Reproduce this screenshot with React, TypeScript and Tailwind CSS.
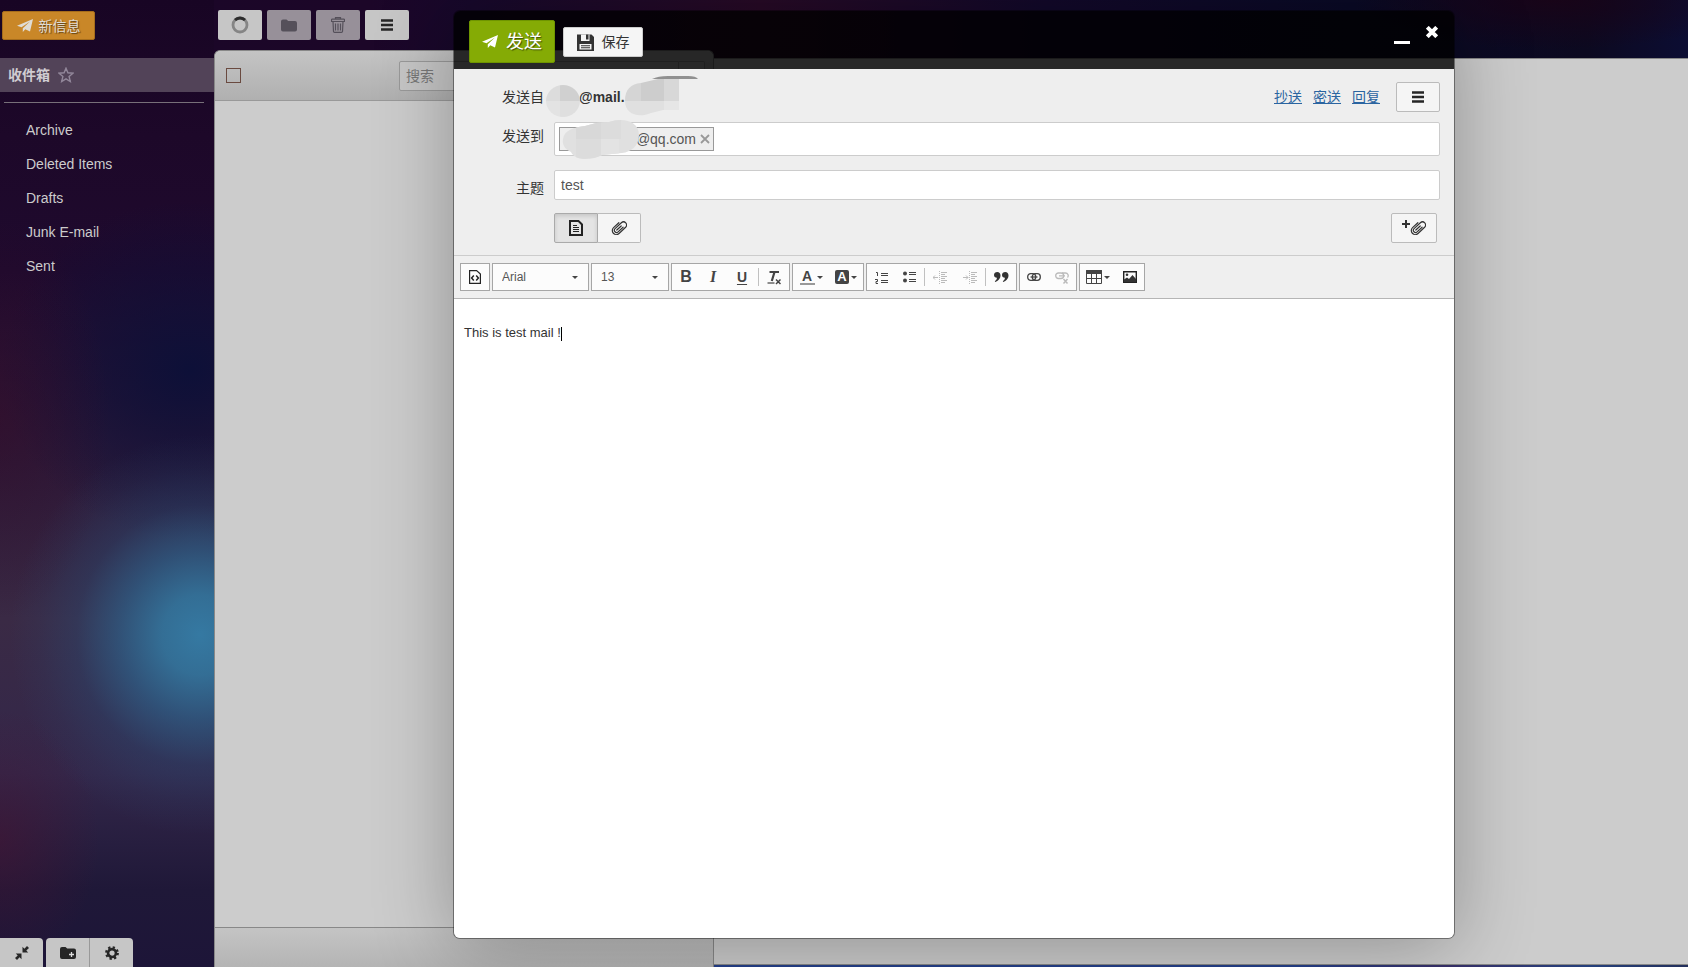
import type { ReactNode } from 'react'

const FOLDERS = ['Archive', 'Deleted Items', 'Drafts', 'Junk E-mail', 'Sent']

export default function App() {
  return (
    <div className="relative flex h-screen overflow-hidden bg-[radial-gradient(ellipse_200px_50px_at_92%_0,#180418,transparent),linear-gradient(90deg,#1a0628_0%,#1c0628_22%,#17082b_28%,#270a26_45%,#12082a_62%,#0a0a26_80%,#0c0920_94%,#0c0d33_100%)] font-['Liberation_Sans','Noto_Sans_CJK_SC',sans-serif] text-sm text-[#333]">
      <Sidebar />
      <MessageList />
      <main className="flex min-w-0 flex-1 flex-col pt-[58px]">
        <div className="flex-1 border-y border-[#888] bg-[#ccc]" />
        <div className="h-0.5 bg-[linear-gradient(90deg,#25408c,#25408c_60%,#38306a_75%,#25407c_90%,#24305c)]" />
      </main>
      <Composer />
    </div>
  )
}

function Sidebar() {
  return (
    <aside className="flex w-[214px] shrink-0 flex-col bg-[radial-gradient(ellipse_190px_200px_at_200px_635px,#3579a2_0%,#33759de8_20%,#2d6690a8_42%,#28507a58_65%,#28507a20_84%,transparent_100%),radial-gradient(ellipse_110px_200px_at_0_420px,#3a0a2470,transparent),radial-gradient(ellipse_100px_130px_at_0_840px,#4a123080,transparent),radial-gradient(ellipse_190px_170px_at_190px_370px,#0d1038,transparent),linear-gradient(180deg,#180524_0,#1d0829_14%,#1f0a2e_28%,#2b1a3a_48%,#3a2a45_64%,#33274a_80%,#1f1838_92%,#1d1538_100%)]">
      <div className="h-[58px] pt-[11px] pl-0.5">
        <button
          type="button"
          className="flex h-[29px] w-[93px] items-center justify-center gap-1.5 rounded-xs border border-[#a56c1c] bg-[#c98728] text-[#e0dcd4] [text-shadow:1px_1px_1px_#0008]"
        >
          <PaperPlane className="h-[13px] w-4" />
          新信息
        </button>
      </div>
      <a href="#inbox" className="flex h-[34px] items-center gap-2 bg-[#524358] pl-2 font-bold text-[#d0ccd2]">
        收件箱
        <svg viewBox="0 0 16 16" className="size-4" fill="none" stroke="#92879a" strokeWidth="1.4" aria-hidden="true">
          <path d="M8 1.2 9.9 5.8 15 6.2 11.1 9.5 12.3 14.5 8 11.8 3.7 14.5 4.9 9.5 1 6.2 6.1 5.8z" />
        </svg>
      </a>
      <hr className="mt-2.5 mr-2.5 ml-1 border-[#777079]" />
      <nav className="mt-2.5 flex flex-1 flex-col">
        {FOLDERS.map((name) => (
          <a key={name} href={`#${name}`} className="flex h-[34px] items-center pl-[26px] text-[#ccc]">
            {name}
          </a>
        ))}
      </nav>
      <div className="flex gap-[3px]">
        <button type="button" aria-label="Collapse" className="flex h-[29px] w-[43px] items-center justify-center rounded-tr-sm bg-[#c6c6c6]">
          <svg viewBox="0 0 14 14" className="size-3.5" fill="#262626" aria-hidden="true">
            <path d="M7.500.800v5.700h5.700L11.300 4.600 14 2 12 0 9.400 2.700zM6.500 13.200V7.500H.800L2.700 9.400 0 12l2 2 2.600-2.700z" />
          </svg>
        </button>
        <div className="flex">
          <button type="button" aria-label="New folder" className="flex h-[29px] w-[44px] items-center justify-center rounded-tl-sm border-r border-[#999] bg-[#c6c6c6]">
            <svg viewBox="0 0 16 14" className="h-3.5 w-4" aria-hidden="true">
              <path fill="#262626" d="M0 3Q0 1 2 1h3.500l1.700 1.500H14q2 0 2 2V11q0 2-2 2H2q-2 0-2-2z" />
              <path stroke="#ddd" strokeWidth="1.300" d="M11.500 6v5M9 8.500h5" />
            </svg>
          </button>
          <button type="button" aria-label="Settings" className="flex h-[29px] w-[43px] items-center justify-center rounded-tr-sm bg-[#c6c6c6]">
            <svg viewBox="0 0 16 16" className="size-3.5" aria-hidden="true">
              <circle cx="8" cy="8" r="4.500" fill="none" stroke="#262626" strokeWidth="3" />
              <circle cx="8" cy="8" r="6.600" fill="none" stroke="#262626" strokeWidth="2.600" strokeDasharray="2.600 2.580" />
            </svg>
          </button>
        </div>
      </div>
    </aside>
  )
}

function MessageList() {
  return (
    <section className="flex w-[500px] shrink-0 flex-col">
      <div className="flex h-[50px] gap-[5px] pt-2.5 pl-1">
        <ToolButton label="Reload" className="bg-[#c6c6c6]">
          <svg viewBox="0 0 18 18" className="size-[18px]" fill="none" strokeWidth="2.800" aria-hidden="true">
            <circle cx="9" cy="9" r="7" stroke="#858585" />
            <path d="M4 4.100A7 7 0 0 1 14 4.100" stroke="#2b2b2b" />
          </svg>
        </ToolButton>
        <ToolButton label="Move to folder" className="bg-[#979099]">
          <svg viewBox="0 0 16 13" className="h-[13px] w-4" fill="#55505a" aria-hidden="true">
            <path d="M0 2.500Q0 .5 2 .5h3.500L7.200 2H14q2 0 2 2v6.500q0 2-2 2H2q-2 0-2-2z" />
          </svg>
        </ToolButton>
        <ToolButton label="Delete" className="bg-[#979099]">
          <svg viewBox="0 0 14 16" className="h-4 w-3.5" fill="none" stroke="#55505a" strokeWidth="1.200" aria-hidden="true">
            <path d="M.5 4.500V3q0-.8.800-.8h11.400q.8 0 .8.800v1.500zM4.500 2V.6h5V2M2 4.500l.5 10q.1.900 1 .9h7q.9 0 1-.9l.5-10M4.500 6.500v7M7 6.500v7M9.500 6.500v7" />
          </svg>
        </ToolButton>
        <ToolButton label="More" className="bg-[#c6c6c6]">
          <Bars />
        </ToolButton>
      </div>
      <div className="flex flex-1 flex-col rounded-t-md border border-b-0 border-[#888] bg-[#ccc]">
        <div className="flex h-[50px] items-center rounded-t-md border-b border-[#999] bg-linear-to-b from-[#c4c4c4] to-[#b0b0b0] pr-2 pl-[11px]">
          <input type="checkbox" aria-label="Select all" className="size-[15px] appearance-none border border-[#6a4a40]" />
          <div className="ml-auto flex w-[306px]">
            <input
              type="text"
              aria-label="搜索"
              placeholder="搜索"
              className="h-[30px] min-w-0 flex-1 rounded-l-xs border border-[#999] bg-[#c6c6c6] px-1.5 placeholder:text-[#777]"
            />
            <button type="button" aria-label="Search options" className="h-[30px] w-[26px] rounded-r-xs border border-l-0 border-[#999] bg-[#c6c6c6]" />
          </div>
        </div>
        <div className="flex-1" />
        <div className="h-10 border-t border-[#888] bg-linear-to-b from-[#c4c4c4] to-[#b4b4b4]" />
      </div>
    </section>
  )
}

function Composer() {
  return (
    <div className="absolute inset-0 flex justify-center pt-[11px] pb-[29px] pl-[220px]">
      <div role="dialog" aria-label="发送" className="flex w-[1000px] flex-col overflow-hidden rounded-md shadow-[0_0_0_1px_#0006,0_8px_80px_#0000004d]">
        <header className="flex h-[58px] shrink-0 items-start bg-black/80 pt-[9px] pr-4 pl-[15px]">
          <button
            type="button"
            className="flex h-[43px] w-[86px] items-center justify-center gap-2 rounded-xs border border-[#6f9500] bg-[#85ab05] text-lg text-white [text-shadow:1px_1px_1px_#0008]"
          >
            <PaperPlane className="h-[13px] w-4" />
            发送
          </button>
          <button type="button" className="mt-[7px] ml-2 flex h-[30px] w-20 items-center justify-center gap-2 rounded-xs border border-[#ccc] bg-[#f5f5f5]">
            <svg viewBox="0 0 17 17" className="size-[17px]" aria-hidden="true">
              <path fill="#333" d="M0 .5h14.500L17 3v14H0z" />
              <path fill="#f5f5f5" d="M4 .5h8.500V7H4zM2.500 10h12v5.500h-12z" />
              <path fill="#333" d="M9 .5h2.500v5H9zM4 11.300h9v1H4zM4 13.300h9v1H4z" />
            </svg>
            保存
          </button>
          <button type="button" aria-label="Minimize" className="ml-auto flex h-6 w-4 items-end">
            <span className="h-[3px] w-4 bg-white" />
          </button>
          <button type="button" aria-label="Close" className="mt-1.5 ml-4">
            <svg viewBox="0 0 12 12" className="size-3" stroke="#fff" strokeWidth="4" aria-hidden="true">
              <path d="M1.300 1.300 10.700 10.700M10.700 1.300 1.300 10.700" />
            </svg>
          </button>
        </header>

        <form className="border-b border-[#ccc] bg-[#eee] pt-[13px] pr-3.5 pb-3">
          <div className="mb-2.5 flex h-[30px] items-center gap-2.5">
            <span className="ml-2.5 w-20 text-right">发送自</span>
            <div className="relative ml-[25px] font-bold">
              @mail.
              <FromSmudge />
            </div>
            <div className="ml-auto flex gap-[11px] pr-1.5 text-[#2a64a0] underline">
              <a href="#cc">抄送</a>
              <a href="#bcc">密送</a>
              <a href="#reply-to">回复</a>
            </div>
            <FormButton label="More" className="w-11">
              <Bars />
            </FormButton>
          </div>

          <div className="mb-3.5 flex gap-2.5">
            <label htmlFor="to" className="ml-2.5 w-20 pt-1 text-right">
              发送到
            </label>
            <div className="flex h-[34px] flex-1 items-center rounded-xs border border-[#ccc] bg-white px-1">
              <span className="relative flex h-6 w-[155px] items-center justify-end gap-1 border border-[#999] bg-[#eee] pr-[3px] text-[#555]">
                @qq.com
                <button type="button" aria-label="Remove">
                  <svg viewBox="0 0 10 10" className="size-2.5" stroke="#999" strokeWidth="1.800" aria-hidden="true">
                    <path d="M1 1l8 8M9 1 1 9" />
                  </svg>
                </button>
                <ToSmudge />
              </span>
              <input id="to" type="text" className="min-w-0 flex-1 outline-none" />
            </div>
          </div>

          <div className="mb-[13px] flex gap-2.5">
            <label htmlFor="subject" className="ml-2.5 w-20 pt-2 text-right">
              主题
            </label>
            <input
              id="subject"
              type="text"
              defaultValue="test"
              className="h-[30px] flex-1 rounded-xs border border-[#ccc] bg-white px-1.5 text-[#555]"
            />
          </div>

          <div className="flex items-center pr-[3px] pl-[100px]">
            <button type="button" aria-label="Text" className="flex h-[30px] w-11 items-center justify-center rounded-l-xs border border-[#aaa] bg-[#e4e4e4] shadow-[inset_0_2px_4px_#0002]">
              <svg viewBox="0 0 14 16" className="h-4 w-3.5" fill="none" stroke="#222" aria-hidden="true">
                <path strokeWidth="2" d="M1 1h8.500L13 4.500V15H1z" />
                <path strokeWidth="1" d="M4 5.500h4M4 7.500h6M4 9.500h6M4 11.500h6" />
              </svg>
            </button>
            <button type="button" aria-label="Attachments" className="flex h-[30px] w-[43px] items-center justify-center rounded-r-xs border border-l-0 border-[#bbb] bg-[#f5f5f5]">
              <Clip />
            </button>
            <FormButton label="Add attachment" className="ml-auto w-[46px]">
              <svg viewBox="0 0 8 8" className="mb-2 size-2" stroke="#333" strokeWidth="2" aria-hidden="true">
                <path d="M4 0v8M0 4h8" />
              </svg>
              <Clip />
            </FormButton>
          </div>
        </form>

        <EditorToolbar />

        <div
          contentEditable
          suppressContentEditableWarning
          role="textbox"
          aria-label="Message"
          className="flex-1 bg-white px-2.5 pt-6 text-[13px] leading-5 outline-none"
        >
          <p>
            This is test mail !<span className="inline-block h-3.5 w-px bg-black align-middle" />
          </p>
        </div>
      </div>
    </div>
  )
}

function EditorToolbar() {
  return (
    <div role="toolbar" className="flex h-[43px] shrink-0 items-center gap-0.5 border-b border-[#b5b5b5] bg-[#efefef] pl-1.5">
      <Group>
        <EditorButton label="Source" className="w-7">
          <svg viewBox="0 0 12 14" className="h-3.5 w-3" fill="none" stroke="#222" aria-hidden="true">
            <path strokeWidth="1.200" d="M.6.600h7L11.400 4v9.400H.6z" />
            <path strokeWidth="1.500" d="M4.800 5.500 2.600 8l2.200 2.500M7.200 5.500 9.400 8l-2.200 2.500" />
          </svg>
        </EditorButton>
      </Group>
      <Group>
        <Combo label="Font" value="Arial" className="w-[95px]" />
      </Group>
      <Group>
        <Combo label="Size" value="13" className="w-[76px]" />
      </Group>
      <Group>
        <EditorButton label="Bold" className="w-7 text-base font-bold">
          B
        </EditorButton>
        <EditorButton label="Italic" className="w-[26px] font-['Liberation_Serif',serif] text-base font-bold italic">
          I
        </EditorButton>
        <EditorButton label="Underline" className="w-8 text-sm font-bold underline underline-offset-2">
          U
        </EditorButton>
        <Separator />
        <EditorButton label="Remove format" className="w-[30px]">
          <svg viewBox="0 0 14 15" className="h-[15px] w-3.5" fill="none" stroke="#444" aria-hidden="true">
            <path strokeWidth="2.200" d="M2.500 2H12M7.500 2 4.800 11" />
            <path strokeWidth="1.200" d="M.5 13h7" />
            <path strokeWidth="1.500" d="M9 9.500l4.500 4.500M13.500 9.500 9 14" />
          </svg>
        </EditorButton>
      </Group>
      <Group>
        <EditorButton label="Text color" className="w-9 gap-0.5">
          <span className="w-[15px] border-b-2 border-[#999] text-center text-sm leading-[14px] font-bold">A</span>
          <Caret />
        </EditorButton>
        <EditorButton label="Background color" className="w-[34px] gap-0.5">
          <span className="size-3.5 rounded-xs bg-[#444] text-center text-[13px] leading-[14px] font-bold text-white">A</span>
          <Caret />
        </EditorButton>
      </Group>
      <Group>
        <EditorButton label="Numbered list" className="w-7">
          <svg viewBox="0 0 13 13" className="size-[13px]" fill="none" stroke="#444" aria-hidden="true">
            <path d="M1 1.500h1.500V5M0 8.500h2.500v2H1v2h2M6 2.500h7M6 4.500h7M6 9.500h7M6 11.500h7" />
          </svg>
        </EditorButton>
        <EditorButton label="Bulleted list" className="w-[29px]">
          <svg viewBox="0 0 13 12" className="h-3 w-[13px]" stroke="#444" aria-hidden="true">
            <circle cx="2" cy="2.500" r="2" fill="#444" stroke="none" />
            <circle cx="2" cy="9.500" r="2" fill="#444" stroke="none" />
            <path d="M6 1.500h7M6 3.500h7M6 8.500h7M6 10.500h7" />
          </svg>
        </EditorButton>
        <Separator />
        <EditorButton label="Outdent" className="w-[30px]">
          <Indent arrow="M5 6.500H0M2 4.500l-2 2 2 2" />
        </EditorButton>
        <EditorButton label="Indent" className="w-[30px]">
          <Indent arrow="M0 6.500h5M3 4.500l2 2-2 2" />
        </EditorButton>
        <Separator />
        <EditorButton label="Quote" className="w-[30px]">
          <svg viewBox="0 0 15 10" className="h-2.5 w-[15px]" fill="#333" aria-hidden="true">
            <path d="M3.300 0C1.400 0 0 1.300 0 3s1.200 2.800 2.900 2.800C2.900 7.500 2 8.500.8 9.200l.5.8C4.200 9 6.500 6.500 6.500 3.500 6.500 1.300 5.200 0 3.300 0zM11.300 0C9.400 0 8 1.300 8 3s1.200 2.800 2.900 2.800c0 1.700-.9 2.700-2.100 3.400l.5.8c2.900-1 5.200-3.500 5.200-6.500C14.500 1.300 13.200 0 11.300 0z" />
          </svg>
        </EditorButton>
      </Group>
      <Group>
        <EditorButton label="Link" className="w-7">
          <ChainLink color="#444" />
        </EditorButton>
        <EditorButton label="Unlink" className="w-7">
          <svg viewBox="0 0 14 12" className="mt-0.5 h-3 w-3.5" fill="none" stroke="#bbb" aria-hidden="true">
            <rect x=".7" y="1" width="8" height="5.500" rx="2.700" strokeWidth="1.300" />
            <path strokeWidth="1.300" d="M7 1h3.500a2.700 2.700 0 0 1 2 4.500M4 3.800h6" />
            <path strokeWidth="1.500" d="M8.500 7l4 4.500M12.500 7l-4 4.500" />
          </svg>
        </EditorButton>
      </Group>
      <Group>
        <EditorButton label="Table" className="w-9 gap-0.5">
          <svg viewBox="0 0 16 14" className="h-3.5 w-4" fill="none" stroke="#444" aria-hidden="true">
            <path fill="#444" d="M.5.500h15v3H.5z" />
            <path d="M.5.500h15v13H.5zM.5 8.500h15M5.500 3v10.500M10.500 3v10.500" />
          </svg>
          <Caret />
        </EditorButton>
        <EditorButton label="Image" className="w-7">
          <svg viewBox="0 0 14 12" className="h-3 w-3.5" aria-hidden="true">
            <path fill="none" stroke="#222" strokeWidth="1.400" d="M.7.700h12.600v10.600H.7z" />
            <path fill="#333" d="M1 11V8.500l3-2 2 1.500 3.500-4L13 8v3z" />
            <circle cx="4" cy="3.800" r="1.300" fill="#333" />
          </svg>
        </EditorButton>
      </Group>
    </div>
  )
}

function ToolButton({ label, className, children }: { label: string; className: string; children: ReactNode }) {
  return (
    <button type="button" aria-label={label} className={`flex h-[30px] w-11 items-center justify-center rounded-xs ${className}`}>
      {children}
    </button>
  )
}

function FormButton({ label, className, children }: { label: string; className: string; children: ReactNode }) {
  return (
    <button type="button" aria-label={label} className={`flex h-[30px] items-center justify-center rounded-xs border border-[#bbb] bg-[#f5f5f5] ${className}`}>
      {children}
    </button>
  )
}

function Group({ children }: { children: ReactNode }) {
  return <div className="flex h-7 items-center border border-[#a6a6a6] bg-[#fcfcfc]">{children}</div>
}

function EditorButton({ label, className, children }: { label: string; className: string; children: ReactNode }) {
  return (
    <button type="button" aria-label={label} className={`flex h-[26px] items-center justify-center text-[#444] ${className}`}>
      {children}
    </button>
  )
}

function Combo({ label, value, className }: { label: string; value: string; className: string }) {
  return (
    <div className={`relative flex items-center ${className}`}>
      <select aria-label={label} defaultValue={value} className="h-[26px] w-full appearance-none pl-[9px] text-xs text-[#555] outline-none">
        <option>{value}</option>
      </select>
      <span className="pointer-events-none absolute right-2.5">
        <Caret />
      </span>
    </div>
  )
}

function Separator() {
  return <span className="h-[18px] w-px bg-[#c0c0c0]" />
}

function Caret() {
  return (
    <svg viewBox="0 0 6 3" className="h-[3px] w-1.5" fill="#444" aria-hidden="true">
      <path d="M0 0h6L3 3z" />
    </svg>
  )
}

function Bars() {
  return (
    <svg viewBox="0 0 12 12" className="size-3" stroke="#262626" strokeWidth="2.400" aria-hidden="true">
      <path d="M0 1.500h12M0 6h12M0 10.500h12" />
    </svg>
  )
}

function PaperPlane({ className }: { className: string }) {
  return (
    <svg viewBox="0 0 16 13" className={className} fill="currentColor" aria-hidden="true">
      <path d="M16 0 0 6.800l4.500 1.500L13 2.500 5.800 9.200V13l2.500-2.800 4.700 2.300z" />
    </svg>
  )
}

function Clip() {
  return (
    <svg viewBox="0 0 16 16" className="size-4" fill="none" stroke="#333" strokeWidth="1.200" strokeLinecap="round" aria-hidden="true">
      <g transform="rotate(47 8 8)">
        <path d="M4 4.500v7.200a4 4 0 0 0 8 0V2.700a3.100 3.100 0 0 0-6.200 0v8.600a2.200 2.200 0 0 0 4.400 0V4.500M8 5v6" />
      </g>
    </svg>
  )
}

function Indent({ arrow }: { arrow: string }) {
  return (
    <svg viewBox="0 0 14 13" className="h-[13px] w-3.5" fill="none" stroke="#bbb" aria-hidden="true">
      <path d={arrow} />
      <path d="M8 1.500h6M8 3.500h4M8 5.500h6M8 7.500h4M8 9.500h6M8 11.500h4" />
      <path strokeDasharray="1 1" d="M6.500 0v13" />
    </svg>
  )
}

function ChainLink({ color }: { color: string }) {
  return (
    <svg viewBox="0 0 14 8" className="h-2 w-3.5" fill="none" stroke={color} strokeWidth="1.300" aria-hidden="true">
      <rect x=".7" y=".7" width="8" height="6.600" rx="3" />
      <rect x="5.300" y=".7" width="8" height="6.600" rx="3" />
      <path d="M3.500 4h7" />
    </svg>
  )
}

/* brushed-out parts of the sender address */
function FromSmudge() {
  return (
    <svg viewBox="0 0 156 44" className="pointer-events-none absolute -top-3 -left-[34px] h-11 w-[156px] max-w-none" aria-hidden="true">
      <clipPath id="from-a">
        <ellipse cx="18" cy="26" rx="17" ry="16" />
      </clipPath>
      <g clipPath="url(#from-a)">
        <path fill="#dcdcdc" d="M0 8h15v18H0z" />
        <path fill="#d0d0d0" d="M15 8h22v18H15z" />
        <path fill="#e3e3e3" d="M0 26h15v18H0z" />
        <path fill="#dfdfdf" d="M15 26h22v18H15z" />
      </g>
      <clipPath id="from-b">
        <path d="M80 26C80 14 86 9 96 8L113 4h21v31H118L106 38C92 44 80 38 80 26z" />
      </clipPath>
      <g clipPath="url(#from-b)">
        <path fill="#d5d5d5" d="M78 3h18v23H78z" />
        <path fill="#cdcdcd" d="M96 3h23v23H96z" />
        <path fill="#d8d8d8" d="M119 3h16v23h-16z" />
        <path fill="#e0e0e0" d="M78 26h41v18H78z" />
        <path fill="#e6e6e6" d="M119 26h16v18h-16z" />
      </g>
      <path fill="#909090" d="M107 4q6-3 16-3h20q8 0 10 3z" />
    </svg>
  )
}

function ToSmudge() {
  return (
    <svg viewBox="0 0 80 42" className="pointer-events-none absolute -top-2.5 left-0.5 h-[42px] w-20 max-w-none" aria-hidden="true">
      <clipPath id="to-a">
        <path d="M1 21C2 12 13 9 23 8L34 5 47 4C61-1 77 3 77 17 77 28 69 34 60 35L40 37C28 43 12 42 9 34 3 31 0 27 1 21z" />
      </clipPath>
      <g clipPath="url(#to-a)">
        <path fill="#e0e0e0" d="M0 0h80v42H0z" />
        <path fill="#d8d8d8" d="M14 0h25v21H14z" />
        <path fill="#dcdcdc" d="M39 0h20v21H39zM14 21h25v21H14z" />
        <path fill="#e3e3e3" d="M39 21h18v21H39z" />
      </g>
    </svg>
  )
}
